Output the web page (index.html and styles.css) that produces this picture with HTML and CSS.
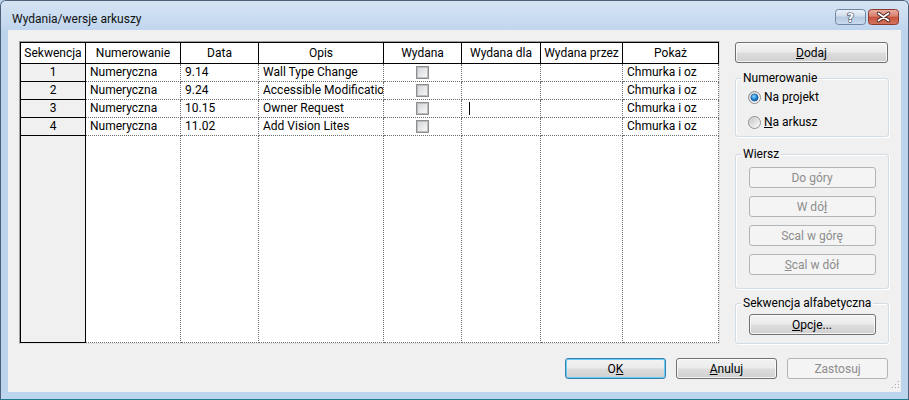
FILE: index.html
```html
<!DOCTYPE html>
<html lang="pl">
<head>
<meta charset="utf-8">
<title>Wydania/wersje arkuszy</title>
<link rel="stylesheet" href="styles.css">
</head>
<body>
<div class="window">
  <div class="titlebar">
    <span class="title">Wydania/wersje arkuszy</span>
    <div class="caption">
      <svg class="cap-btn" width="31" height="16" viewBox="0 0 31 16">
        <defs>
          <linearGradient id="hg" x1="0" y1="0" x2="0" y2="1">
            <stop offset="0" stop-color="#eef3fa"/>
            <stop offset="0.45" stop-color="#cfdcec"/>
            <stop offset="0.5" stop-color="#b4c8e0"/>
            <stop offset="1" stop-color="#cbdcef"/>
          </linearGradient>
        </defs>
        <rect x="0.5" y="0.5" width="30" height="15" rx="3" fill="url(#hg)" stroke="#6f86a3"/>
        <text x="15.5" y="12.5" text-anchor="middle" font-family="DejaVu Sans" font-weight="bold" font-size="12" fill="#ffffff" stroke="#3b4d63" stroke-width="1.2" paint-order="stroke">?</text>
      </svg>
      <svg class="cap-btn" width="31" height="16" viewBox="0 0 31 16">
        <defs>
          <linearGradient id="cg" x1="0" y1="0" x2="0" y2="1">
            <stop offset="0" stop-color="#eab0a4"/>
            <stop offset="0.45" stop-color="#d9806f"/>
            <stop offset="0.5" stop-color="#c8513d"/>
            <stop offset="1" stop-color="#d4755f"/>
          </linearGradient>
        </defs>
        <rect x="0.5" y="0.5" width="30" height="15" rx="3" fill="url(#cg)" stroke="#8b3a2e"/>
        <path d="M10.5 4.5 L20.5 11.5 M20.5 4.5 L10.5 11.5" stroke="#4a2520" stroke-width="3.6" stroke-linecap="round"/>
        <path d="M10.5 4.5 L20.5 11.5 M20.5 4.5 L10.5 11.5" stroke="#ffffff" stroke-width="1.8" stroke-linecap="round"/>
      </svg>
    </div>
  </div>

  <div class="client">
    <div class="main">
      <div class="grid-frame">
        <div class="grid">
          <div class="c h">Sekwencja</div>
          <div class="c h">Numerowanie</div>
          <div class="c h">Data</div>
          <div class="c h">Opis</div>
          <div class="c h">Wydana</div>
          <div class="c h">Wydana dla</div>
          <div class="c h">Wydana przez</div>
          <div class="c h">Pokaż</div>

          <div class="c s">1</div>
          <div class="c">Numeryczna</div>
          <div class="c">9.14</div>
          <div class="c">Wall Type Change</div>
          <div class="c cbcell"><span class="cb"></span></div>
          <div class="c"></div>
          <div class="c"></div>
          <div class="c">Chmurka i oz</div>

          <div class="c s">2</div>
          <div class="c">Numeryczna</div>
          <div class="c">9.24</div>
          <div class="c">Accessible Modificatio</div>
          <div class="c cbcell"><span class="cb"></span></div>
          <div class="c"></div>
          <div class="c"></div>
          <div class="c">Chmurka i oz</div>

          <div class="c s">3</div>
          <div class="c">Numeryczna</div>
          <div class="c">10.15</div>
          <div class="c">Owner Request</div>
          <div class="c cbcell"><span class="cb"></span></div>
          <div class="c editing"><span class="caret"></span></div>
          <div class="c"></div>
          <div class="c">Chmurka i oz</div>

          <div class="c s">4</div>
          <div class="c">Numeryczna</div>
          <div class="c">11.02</div>
          <div class="c">Add Vision Lites</div>
          <div class="c cbcell"><span class="cb"></span></div>
          <div class="c"></div>
          <div class="c"></div>
          <div class="c">Chmurka i oz</div>

          <div class="c s"></div>
          <div class="c"></div>
          <div class="c"></div>
          <div class="c"></div>
          <div class="c"></div>
          <div class="c"></div>
          <div class="c"></div>
          <div class="c"></div>
        </div>
      </div>

      <div class="panel">
        <button class="btn dodaj"><u>D</u>odaj</button>

        <div class="group g-num">
          <div class="group-title">Numerowanie</div>
          <div class="radio-row first">
            <svg width="13" height="13" viewBox="0 0 13 13">
              <defs>
                <linearGradient id="ro1" x1="0" y1="0" x2="1" y2="1">
                  <stop offset="0" stop-color="#d0d0d0"/>
                  <stop offset="1" stop-color="#ffffff"/>
                </linearGradient>
                <radialGradient id="rd1" cx="0.4" cy="0.35" r="0.7">
                  <stop offset="0" stop-color="#8fdcff"/>
                  <stop offset="0.5" stop-color="#2a8fe0"/>
                  <stop offset="1" stop-color="#0a4a96"/>
                </radialGradient>
              </defs>
              <circle cx="6.5" cy="6.5" r="6" fill="url(#ro1)" stroke="#8a8c8e"/>
              <circle cx="6.5" cy="6.5" r="3.6" fill="url(#rd1)" stroke="#1a4f8a" stroke-width="0.6"/>
            </svg>
            <span>Na p<u>r</u>ojekt</span>
          </div>
          <div class="radio-row second">
            <svg width="13" height="13" viewBox="0 0 13 13">
              <defs>
                <linearGradient id="ro2" x1="0" y1="0" x2="1" y2="1">
                  <stop offset="0" stop-color="#d0d0d0"/>
                  <stop offset="1" stop-color="#ffffff"/>
                </linearGradient>
                <linearGradient id="ri2" x1="0" y1="0" x2="1" y2="1">
                  <stop offset="0" stop-color="#c9c9c9"/>
                  <stop offset="1" stop-color="#f6f6f6"/>
                </linearGradient>
              </defs>
              <circle cx="6.5" cy="6.5" r="6" fill="url(#ro2)" stroke="#8a8c8e"/>
              <circle cx="6.5" cy="6.5" r="4.2" fill="url(#ri2)"/>
            </svg>
            <span><u>N</u>a arkusz</span>
          </div>
        </div>

        <div class="group g-row">
          <div class="group-title">Wiersz</div>
          <button class="btn small disabled first" disabled>Do <u>g</u>óry</button>
          <button class="btn small disabled" disabled>W dó<u>ł</u></button>
          <button class="btn small disabled" disabled>Scal w <u>g</u>órę</button>
          <button class="btn small disabled" disabled><u>S</u>cal w dół</button>
        </div>

        <div class="group g-alpha">
          <div class="group-title">Sekwencja alfabetyczna</div>
          <button class="btn small opcje"><u>O</u>pcje...</button>
        </div>
      </div>
    </div>

    <div class="footer">
      <button class="btn foot focused">O<u>K</u></button>
      <button class="btn foot"><u>A</u>nuluj</button>
      <button class="btn foot disabled" disabled>Zastosuj</button>
    </div>

    <svg class="grip" width="11" height="11" viewBox="0 0 11 11">
      <rect x="9" y="1" width="1" height="1" fill="#a8a8a8"/>
      <rect x="6" y="4" width="1" height="1" fill="#a8a8a8"/>
      <rect x="9" y="4" width="1" height="1" fill="#a8a8a8"/>
      <rect x="3" y="7" width="1" height="1" fill="#a8a8a8"/>
      <rect x="6" y="7" width="1" height="1" fill="#a8a8a8"/>
      <rect x="9" y="7" width="1" height="1" fill="#a8a8a8"/>
      <rect x="10" y="2" width="1" height="1" fill="#ffffff"/>
      <rect x="7" y="5" width="1" height="1" fill="#ffffff"/>
      <rect x="10" y="5" width="1" height="1" fill="#ffffff"/>
      <rect x="4" y="8" width="1" height="1" fill="#ffffff"/>
      <rect x="7" y="8" width="1" height="1" fill="#ffffff"/>
      <rect x="10" y="8" width="1" height="1" fill="#ffffff"/>
    </svg>
  </div>
</div>
</body>
</html>
```

FILE: styles.css
```css
html, body {
  margin: 0;
  padding: 0;
  background: #bfd5ee;
}

.window {
  width: 909px;
  height: 400px;
  box-sizing: border-box;
  border: 1px solid #4d6079;
  border-bottom-color: #1f7d8f;
  border-radius: 6px 6px 0 0;
  background: #bdd4ed;
  display: flex;
  flex-direction: column;
  font-family: Roboto, "Noto Sans", "DejaVu Sans", sans-serif;
  font-size: 12px;
  color: #000;
  overflow: hidden;
}

.titlebar {
  height: 29px;
  box-sizing: border-box;
  display: flex;
  justify-content: space-between;
  align-items: flex-start;
  padding: 8px 9px 0 11px;
  background: linear-gradient(#d6e4f3, #c0d6ee);
}

.title {
  margin-top: 3px;
  line-height: 15px;
  color: #111;
}

.caption {
  display: flex;
  gap: 2px;
}

.cap-btn {
  display: block;
}

.client {
  flex: 1;
  margin: 0 7px 7px 7px;
  background: #f0f0f0;
  padding: 11px 12px 0 11px;
  display: flex;
  flex-direction: column;
  position: relative;
}

.main {
  display: flex;
  gap: 15px;
  height: 303px;
}

.grid-frame {
  width: 701px;
  height: 303px;
  box-sizing: border-box;
  border: 1px solid;
  border-color: #a0a0a0 #e2e2e2 #e2e2e2 #a0a0a0;
}

.grid {
  display: grid;
  grid-template-columns: 65px 95px 78px 125px 78px 79px 82px 96px;
  grid-template-rows: 21px repeat(4, 18px) 207px;
  border-top: 1px solid #000;
  border-left: 1px solid #000;
  background: #fff;
}

.c {
  box-sizing: border-box;
  border-right: 1px dotted #6e6e6e;
  border-bottom: 1px dotted #6e6e6e;
  padding-left: 4px;
  line-height: 17px;
  white-space: nowrap;
  overflow: hidden;
}

.h {
  border-right: 1px solid #000;
  border-bottom: 1px solid #000;
  text-align: center;
  line-height: 20px;
  padding: 0;
  background: #fff;
}

.s {
  background: #f0f0f0;
  border-right: 1px solid #000;
  border-bottom: 1px solid #000;
  text-align: center;
  padding: 0;
}

.cbcell {
  display: flex;
  justify-content: center;
  align-items: center;
  padding: 0;
}

.cb {
  width: 13px;
  height: 13px;
  box-sizing: border-box;
  border: 1px solid #8e8f8f;
  box-shadow: inset 0 0 0 1px #bdbdbd;
  background: linear-gradient(135deg, #cfd3d9 0%, #e9eaec 55%, #fafafa 100%);
}

.editing {
  display: flex;
  align-items: center;
}

.caret {
  width: 1px;
  height: 13px;
  background: #000;
  margin-left: 3px;
}

.panel {
  width: 154px;
  display: flex;
  flex-direction: column;
}

.btn {
  display: block;
  box-sizing: border-box;
  height: 21px;
  margin: 0;
  padding: 0;
  border: 1px solid #707070;
  border-radius: 3px;
  background: linear-gradient(#f3f3f3 0%, #ebebeb 48%, #dddddd 52%, #d0d0d0 100%);
  box-shadow: inset 0 0 0 1px rgba(255, 255, 255, 0.75);
  font-family: inherit;
  font-size: 12px;
  color: #000;
  text-align: center;
  line-height: 18px;
  white-space: nowrap;
}

.btn u {
  text-underline-offset: 1px;
}

.btn.disabled {
  border-color: #b2b5b8;
  background: #f4f4f4;
  box-shadow: none;
  color: #8d8d8d;
}

.btn.focused {
  border-color: #3c7fb1;
  box-shadow: inset 0 0 0 1px #62cdf6;
}

.dodaj {
  margin-top: 1px;
  width: 153px;
}

.group {
  box-sizing: border-box;
  border: 1px solid #d3dce3;
  border-radius: 3px;
  box-shadow: inset 1px 1px 0 #ffffff, 1px 1px 0 #ffffff;
  display: flex;
  flex-direction: column;
  align-items: center;
}

.group-title {
  align-self: flex-start;
  margin: -8px 0 0 5px;
  padding: 0 2px;
  background: #f0f0f0;
  line-height: 15px;
}

.g-num {
  margin-top: 15px;
  height: 59px;
}

.radio-row {
  align-self: stretch;
  display: flex;
  align-items: center;
  gap: 3px;
  height: 18px;
  padding-left: 12px;
}

.radio-row svg {
  display: block;
}

.radio-row.first {
  margin-top: 2px;
}

.radio-row.second {
  margin-top: 7px;
}

.g-row {
  margin-top: 17px;
  height: 135px;
}

.small {
  width: 127px;
  margin-top: 8px;
}

.small.first {
  margin-top: 5px;
}

.g-alpha {
  margin-top: 14px;
  height: 41px;
}

.small.opcje {
  margin-top: 3px;
}

.footer {
  display: flex;
  justify-content: flex-end;
  gap: 10px;
  margin-top: 14px;
  padding-right: 1px;
}

.foot {
  width: 101px;
}

.grip {
  position: absolute;
  right: 1px;
  bottom: 1px;
}
```
